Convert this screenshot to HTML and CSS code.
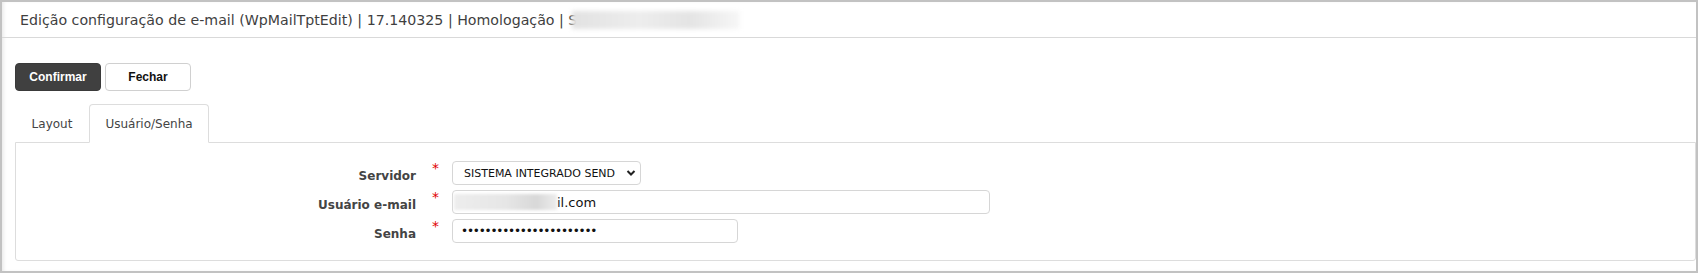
FILE: index.html
```html
<!DOCTYPE html>
<html lang="pt-BR">
<head>
<meta charset="utf-8">
<title>Edição configuração de e-mail</title>
<link rel="stylesheet" href="styles.css">
</head>
<body>
<div class="frame">
  <div class="header">
    <span class="title">Edição configuração de e-mail (WpMailTptEdit) | 17.140325 | Homologação | S</span><span class="blur blur-title"></span>
  </div>
  <div class="actions">
    <button class="btn btn-primary">Confirmar</button>
    <button class="btn btn-default">Fechar</button>
  </div>
  <div class="tabs">
    <div class="tab">Layout</div>
    <div class="tab tab-active">Usuário/Senha</div>
  </div>
  <div class="panel">
    <div class="form">
      <div class="label">Servidor</div>
      <div class="req">*</div>
      <div class="field select">
        <span class="select-text">SISTEMA INTEGRADO SEND</span>
        <svg class="chev" width="10" height="8" viewBox="0 0 10 8"><path d="M1.5 2 L5 5.5 L8.5 2" fill="none" stroke="#222" stroke-width="2"/></svg>
      </div>
      <div class="label">Usuário e-mail</div>
      <div class="req">*</div>
      <div class="field input-email"><span class="blur blur-email"></span><span class="val">il.com</span></div>
      <div class="label">Senha</div>
      <div class="req">*</div>
      <div class="field input-pass"><span class="dots">•••••••••••••••••••••••</span></div>
    </div>
  </div>
</div>
</body>
</html>
```
FILE: styles.css
```css
* { box-sizing: border-box; }
html, body { margin: 0; padding: 0; background: #fff; }
.frame {
  width: 1698px;
  height: 273px;
  border: 2px solid #c2c2c2;
  box-shadow: inset 3px 0 4px -2px #e4e4e4;
  font-family: "DejaVu Sans", Verdana, sans-serif;
  color: #444;
  overflow: hidden;
}
.header {
  height: 36px;
  border-bottom: 1px solid #d9d9d9;
  padding-left: 18px;
  display: flex;
  align-items: center;
  font-size: 14.2px;
  color: #3f3f3f;
  white-space: nowrap;
}
.blur {
  display: inline-block;
  background: linear-gradient(90deg, #e2e2e2 0%, #ededed 40%, #e4e4e4 70%, #f7f7f7 100%);
  filter: blur(2px);
}
.blur-title { width: 168px; height: 18px; margin-left: -5px; }
.actions {
  display: flex;
  gap: 4px;
  margin: 25px 0 0 13px;
}
.btn {
  width: 86px;
  height: 28px;
  border-radius: 4px;
  font-family: "Liberation Sans", Arial, sans-serif;
  font-weight: bold;
  font-size: 12px;
  padding: 0;
}
.btn-primary { background: #404040; color: #fff; border: 1px solid #3a3a3a; }
.btn-default { background: #fff; color: #111; border: 1px solid #d0d0d0; }
.tabs {
  display: flex;
  margin: 13px 0 0 13px;
  height: 39px;
  position: relative;
  z-index: 1;
  margin-bottom: -1px;
}
.tab {
  width: 74px;
  height: 39px;
  display: flex;
  align-items: center;
  justify-content: center;
  font-size: 12px;
  color: #444;
  padding-top: 1px;
}
.tab-active {
  width: 120px;
  border: 1px solid #dddddd;
  border-bottom-color: #fff;
  border-radius: 4px 4px 0 0;
  background: #fff;
}
.panel {
  margin-left: 13px;
  height: 119px;
  border: 1px solid #dddddd;
  border-radius: 0 0 3px 3px;
  padding-top: 18px;
}
.form {
  display: grid;
  grid-template-columns: 400px 36px auto;
  grid-auto-rows: 24px;
  row-gap: 5px;
  align-items: start;
}
.label {
  font-weight: bold;
  font-size: 12px;
  text-align: right;
  line-height: 24px;
  padding-top: 3px;
  color: #444;
}
.req {
  color: #e00000;
  font-size: 14px;
  line-height: 14px;
  padding-left: 16px;
  margin-top: 0;
}
.field {
  height: 24px;
  border: 1px solid #d6d6d6;
  border-radius: 4px;
  display: flex;
  align-items: center;
  font-size: 11px;
  color: #111;
  background: #fff;
}
.select {
  width: 189px;
  padding-left: 11px;
  padding-right: 4px;
  justify-content: space-between;
}
.input-email { width: 538px; padding-left: 1px; }
.blur-email { width: 103px; height: 16px; filter: blur(1.5px); background: linear-gradient(90deg, #ededed 0%, #e6e6e6 50%, #d8d8d8 80%, #ececec 100%); }
.val { font-size: 13px; }
.input-pass { width: 286px; padding-left: 8px; }
.dots { font-size: 12px; letter-spacing: -1.2px; }
```
